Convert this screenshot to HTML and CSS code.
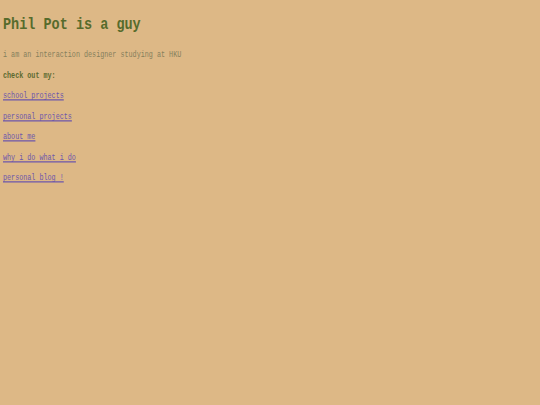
FILE: index.html
```html
<!DOCTYPE html>
<html>
<head>
<meta charset="utf-8">
<title>Phil Pot is a guy</title>
<link rel="stylesheet" href="styles.css">
</head>
<body>
<h1 class="title">Phil Pot is a guy</h1>
<p class="line intro">i am an interaction designer studying at HKU</p>
<p class="line label">check out my:</p>
<p class="line"><a class="link" href="#school">school projects</a></p>
<p class="line"><a class="link" href="#personal">personal projects</a></p>
<p class="line"><a class="link" href="#about">about me</a></p>
<p class="line"><a class="link" href="#why">why i do what i do</a></p>
<p class="line"><a class="link" href="#blog">personal blog !</a></p>
</body>
</html>
```
FILE: styles.css
```css
html {
  background: #ddb886;
}
body {
  margin: 0;
  padding: 0 0 0 3px;
  font-family: "Liberation Mono", "Courier New", monospace;
  background: #ddb886;
}
.title {
  margin: 15.5px 0 9.5px;
  font-size: 13.5px;
  line-height: 20px;
  font-weight: bold;
  color: #566b2c;
  transform: scaleY(1.22);
  transform-origin: 0 13.6px;
}
.line {
  margin: 0;
  font-size: 6.75px;
  line-height: 20.5px;
  color: #857f5c;
  transform: scaleY(1.25);
  transform-origin: 0 12px;
}
.label {
  font-weight: bold;
  color: #5c6a30;
}
.link {
  color: #6c56ac;
  text-decoration: underline;
  text-decoration-thickness: 0.8px;
  text-underline-offset: 1px;
}
```
